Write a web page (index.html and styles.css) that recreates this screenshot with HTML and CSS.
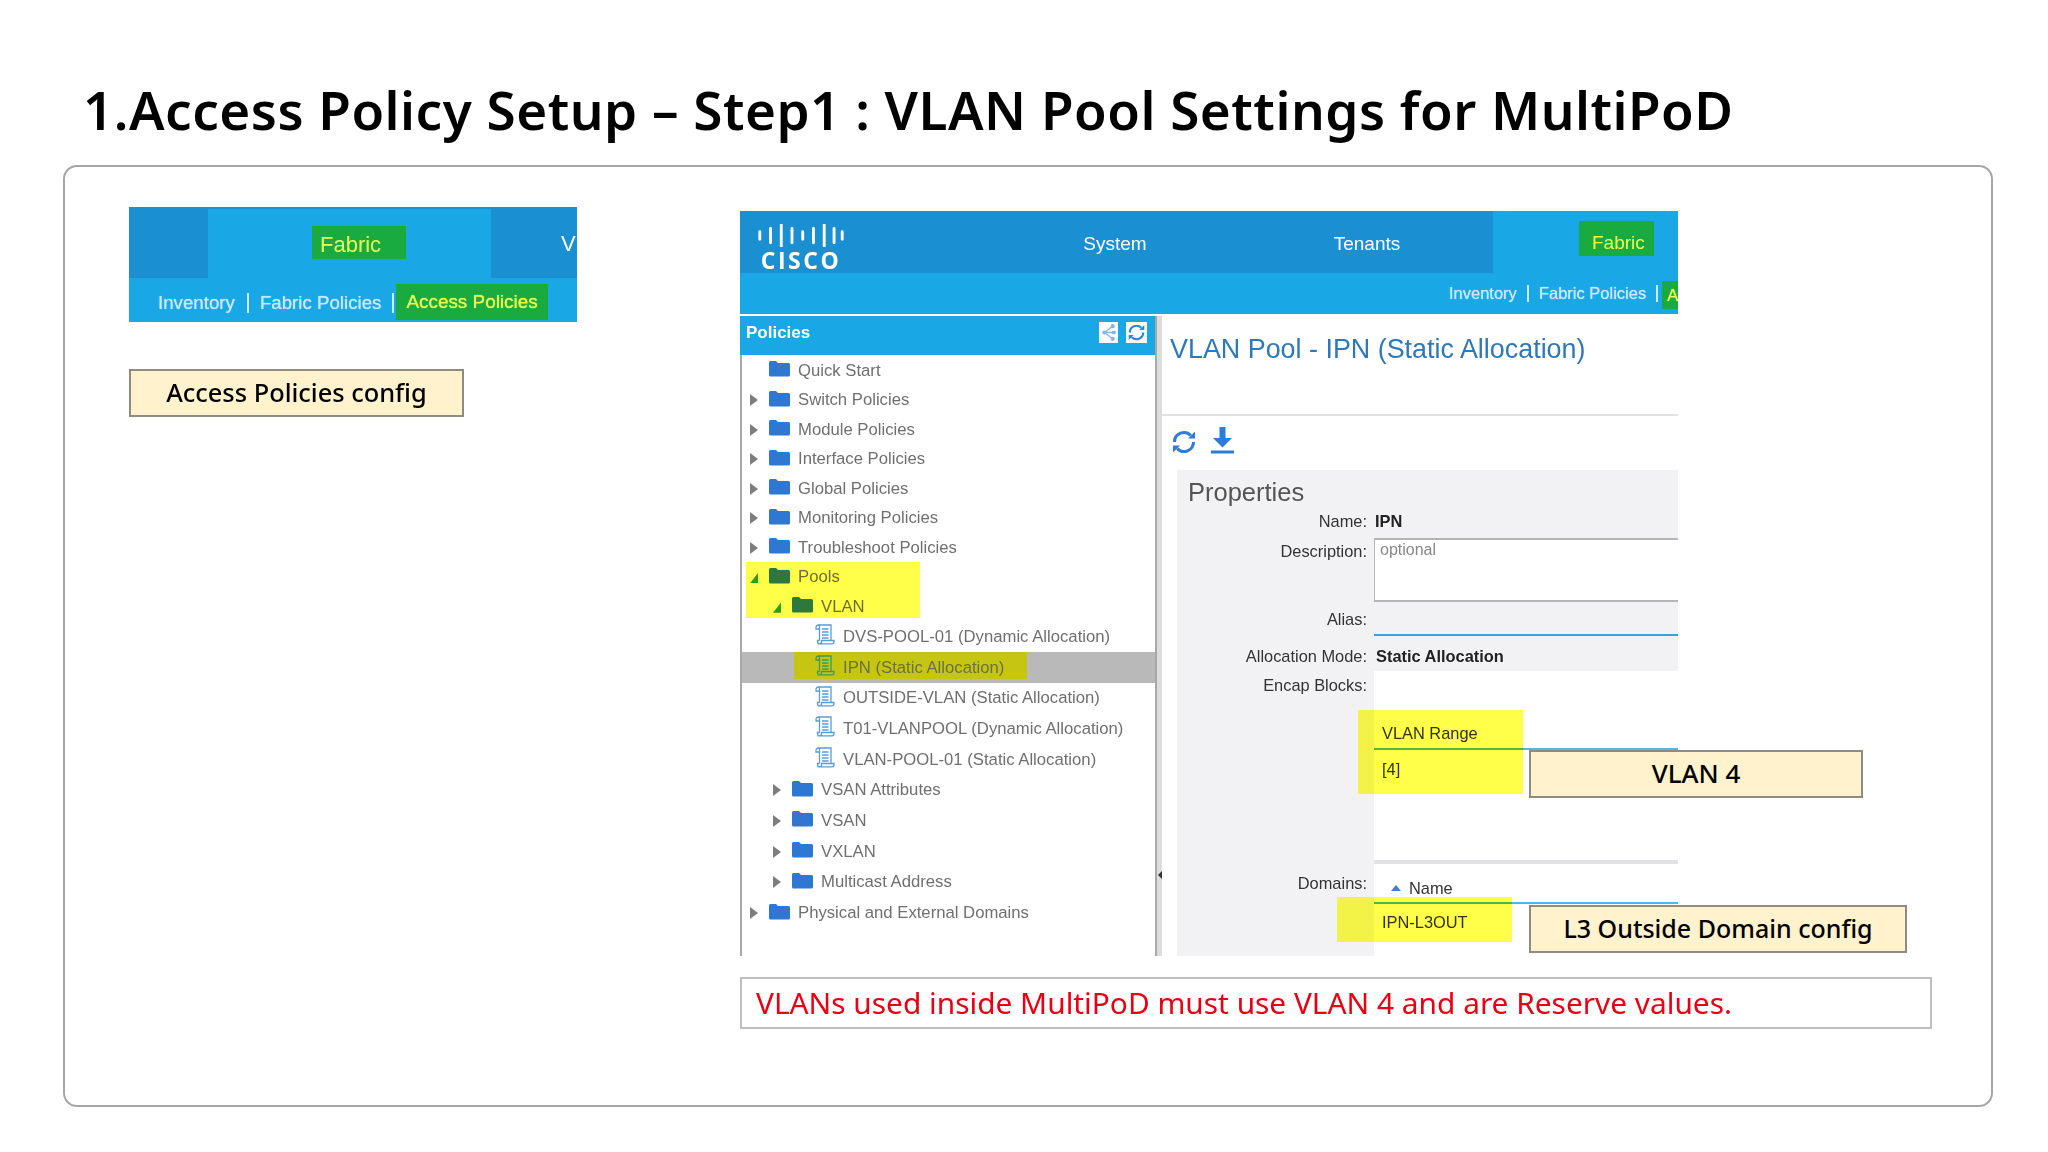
FILE: index.html
```html
<!DOCTYPE html>
<html lang="en">
<head>
<meta charset="utf-8">
<title>VLAN Pool Settings for MultiPoD</title>
<link rel="stylesheet" href="styles.css">
</head>
<body>
<svg class="defs" aria-hidden="true">
  <symbol id="folder" viewBox="0 0 21 17"><path d="M0 2.500A1.500 1.500 0 0 1 1.500 1H7l2 2h10.500A1.500 1.500 0 0 1 21 4.500V15a1.500 1.500 0 0 1-1.500 1.500h-18A1.500 1.500 0 0 1 0 15z" fill="currentColor"/></symbol>
  <symbol id="doc" viewBox="0 0 20 21"><g fill="none" stroke="currentColor" stroke-width="1.300"><path d="M1 3.500A2.500 2.500 0 0 1 3.500 1H16v15.500"/><path d="M1 3.500V5h3.500V3.500A2.500 2.500 0 0 0 3.500 1"/><path d="M4.500 5v11.500"/><path d="M2.500 19.800h14.500a2 2 0 0 0 2-2v-1.300H6.500v1.300a2 2 0 0 1-2 2 2 2 0 0 1-2-2v-1.300h2"/><path d="M7 5h6.500M7 8h6.500M7 11h6.500M7 14h6.500"/></g></symbol>
  <symbol id="sync" viewBox="0 0 26 24"><g fill="none" stroke="currentColor" stroke-width="3"><path d="M3.500 12a9.500 9.500 0 0 1 16.300-6.600"/><path d="M22.500 12a9.500 9.500 0 0 1-16.300 6.600"/></g><path d="M17 8.500h7V1.500zM9 15.500H2v7z" fill="currentColor"/></symbol>
</svg>
<main class="slide">
  <h1 class="title">1.Access Policy Setup – Step1 : VLAN Pool Settings for MultiPoD</h1>
  <section class="frame">
    <div class="col-left">
      <div class="strip">
        <div class="strip-top">
          <div class="strip-tab"><span class="tag strip-fabric">Fabric</span></div>
          <div class="strip-next">V</div>
        </div>
        <div class="strip-sub">
          <span>Inventory</span><i class="sep"></i><span>Fabric Policies</span><i class="sep sep-b"></i><span class="tag strip-access">Access Policies</span>
        </div>
      </div>
      <div class="callout callout-access">Access Policies config</div>
    </div>
    <div class="col-right">
      <div class="screen">
        <header class="nav">
          <div class="logo">
            <svg class="bars" viewBox="0 0 90 24" aria-hidden="true"><path d="M2 8v8M13.200 4.500v15M24.400 1v22M35.600 4.500v15M46.800 8v8M58 4.500v15M69.200 1v22M79.500 4.500v15M88 8v8" stroke="currentColor" stroke-width="3" stroke-linecap="round"/></svg>
            <span class="wordmark">CISCO</span>
          </div>
          <div class="tab">System</div>
          <div class="tab">Tenants</div>
          <div class="tab-on"><span class="tag nav-fabric">Fabric</span></div>
        </header>
        <div class="subnav"><span>Inventory</span><i class="sep"></i><span>Fabric Policies</span><i class="sep sep-c"></i><span class="tag nav-access">A</span></div>
        <div class="workspace">
          <aside class="tree">
            <div class="tree-head"><b>Policies</b>
              <span class="tool"><svg viewBox="0 0 18 20" aria-hidden="true"><path d="M0 0h18v20H0z" fill="#fff"/><path d="M13 4L5 10l8 6M5 10h8" stroke="#7fb8e6" stroke-width="1.200" fill="none"/><circle cx="13" cy="4" r="2" fill="#7fb8e6"/><circle cx="5" cy="10" r="2" fill="#7fb8e6"/><circle cx="13" cy="16" r="2" fill="#7fb8e6"/><circle cx="14" cy="10" r="2" fill="#7fb8e6"/></svg></span>
              <span class="tool tool-sync"><svg class="sync-mini" aria-hidden="true"><use href="#sync"/></svg></span>
            </div>
            <ul class="rows">
              <li class="row l1"><i class="caret none"></i><svg class="folder"><use href="#folder"/></svg>Quick Start</li>
              <li class="row l1"><i class="caret"></i><svg class="folder"><use href="#folder"/></svg>Switch Policies</li>
              <li class="row l1"><i class="caret"></i><svg class="folder"><use href="#folder"/></svg>Module Policies</li>
              <li class="row l1"><i class="caret"></i><svg class="folder"><use href="#folder"/></svg>Interface Policies</li>
              <li class="row l1"><i class="caret"></i><svg class="folder"><use href="#folder"/></svg>Global Policies</li>
              <li class="row l1"><i class="caret"></i><svg class="folder"><use href="#folder"/></svg>Monitoring Policies</li>
              <li class="row l1"><i class="caret"></i><svg class="folder"><use href="#folder"/></svg>Troubleshoot Policies</li>
              <li class="row l1"><i class="caret open"></i><svg class="folder"><use href="#folder"/></svg>Pools</li>
              <li class="row l2"><i class="caret open"></i><svg class="folder"><use href="#folder"/></svg>VLAN</li>
              <li class="row l3 tall"><svg class="doc"><use href="#doc"/></svg>DVS-POOL-01 (Dynamic Allocation)</li>
              <li class="row l3 tall selected"><svg class="doc"><use href="#doc"/></svg>IPN (Static Allocation)</li>
              <li class="row l3 tall"><svg class="doc"><use href="#doc"/></svg>OUTSIDE-VLAN (Static Allocation)</li>
              <li class="row l3 tall"><svg class="doc"><use href="#doc"/></svg>T01-VLANPOOL (Dynamic Allocation)</li>
              <li class="row l3 tall"><svg class="doc"><use href="#doc"/></svg>VLAN-POOL-01 (Static Allocation)</li>
              <li class="row l2 tall"><i class="caret"></i><svg class="folder"><use href="#folder"/></svg>VSAN Attributes</li>
              <li class="row l2 tall"><i class="caret"></i><svg class="folder"><use href="#folder"/></svg>VSAN</li>
              <li class="row l2 tall"><i class="caret"></i><svg class="folder"><use href="#folder"/></svg>VXLAN</li>
              <li class="row l2 tall"><i class="caret"></i><svg class="folder"><use href="#folder"/></svg>Multicast Address</li>
              <li class="row l1 tall"><i class="caret"></i><svg class="folder"><use href="#folder"/></svg>Physical and External Domains</li>
            </ul>
          </aside>
          <div class="splitter"><i class="grip"></i></div>
          <div class="pane">
            <h2 class="pane-title">VLAN Pool - IPN (Static Allocation)</h2>
            <div class="toolbar">
              <svg class="act-sync" aria-hidden="true"><use href="#sync"/></svg>
              <svg class="act-down" viewBox="0 0 23 27" aria-hidden="true"><path d="M8.500 0h6v11H21L11.500 20.500 2 11h6.500z" fill="currentColor"/><path d="M0 25h23" stroke="currentColor" stroke-width="3"/></svg>
            </div>
            <div class="props">
              <h3 class="props-title">Properties</h3>
              <div class="field f-name"><label class="lab">Name:</label><strong class="val-b">IPN</strong></div>
              <div class="field f-desc"><label class="lab">Description:</label><div class="area">optional</div></div>
              <div class="field f-alias"><label class="lab">Alias:</label><div class="input"></div></div>
              <div class="field f-mode"><label class="lab">Allocation Mode:</label><strong class="val-b val-mode">Static Allocation</strong></div>
              <div class="field f-encap"><label class="lab">Encap Blocks:</label>
                <div class="table t-encap"><div class="th">VLAN Range</div><div class="td">[4]</div></div>
              </div>
              <div class="field f-dom"><label class="lab">Domains:</label>
                <div class="table t-dom"><div class="th"><i class="sort"></i>Name</div><div class="td">IPN-L3OUT</div></div>
              </div>
            </div>
          </div>
        </div>
        <i class="hl hl-pools"></i>
        <i class="hl hl-range"></i>
        <i class="hl hl-l3"></i>
      </div>
      <div class="note">VLANs used inside MultiPoD must use VLAN 4 and are Reserve values.</div>
      <div class="callout callout-vlan">VLAN 4</div>
      <div class="callout callout-l3">L3 Outside Domain config</div>
    </div>
  </section>
</main>
</body>
</html>
```
FILE: styles.css
```css
* { box-sizing: border-box; }
html, body { margin: 0; padding: 0; background: #fff; }
.defs { position: absolute; width: 0; height: 0; overflow: hidden; }
.slide { width: 2048px; height: 1152px; padding: 76px 55px 0 63px; font-family: "Noto Sans", sans-serif; color: #000; overflow: hidden; }
.title { margin: 0 0 0 20px; height: 89px; font-size: 53px; line-height: 68px; font-weight: 600; letter-spacing: .5px; white-space: nowrap; }
.frame { display: flex; width: 1930px; height: 942px; border: 2px solid #a6a6a6; border-radius: 14px; }
.col-left { width: 512px; padding: 40px 0 0 64px; flex: none; }
.col-right { position: relative; margin-left: 163px; padding-top: 44px; width: 1192px; flex: none; }

/* shared */
.tag { background: #1aab40; color: #e9ff55; }
.sep { display: block; width: 2px; height: 20px; background: #cbeafb; flex: none; }
.strip, .screen { font-family: "Liberation Sans", Arial, sans-serif; }

/* left strip */
.strip { width: 448px; height: 115px; background: #1aa7e6; overflow: hidden; }
.strip-top { height: 71px; background: #1a8fd1; display: flex; color: #fff; }
.strip-tab { margin: 2px 0 0 79px; width: 283px; background: #1aa7e6; padding: 17px 0 0 104px; }
.strip-fabric { display: block; width: 94px; height: 33px; padding-left: 8px; font-size: 22px; line-height: 37px; }
.strip-next { margin-left: 70px; font-size: 22px; line-height: 74px; }
.strip-sub { display: flex; align-items: center; height: 38px; margin-top: 6px; padding-left: 29px; color: #c8e9fb; font-size: 18.700px; text-shadow: 0 0 1px currentColor; white-space: nowrap; }
.strip-sub .sep { margin: 0 11px 0 12px; }
.strip-sub .sep-b { margin: 0 2px 0 11px; }
.strip-access { padding: 0 0 0 10px; height: 36px; line-height: 36px; width: 152px; margin-bottom: 2px; color: #e9ff55; font-size: 18.900px; }

/* callouts */
.callout { background: #fff2cc; border: 2px solid #8c8c80; text-align: center; font-family: "Noto Sans", sans-serif; font-weight: 500; font-size: 25px; line-height: 44px; height: 48px; }
.callout-access { width: 335px; margin-top: 47px; font-size: 25.400px; line-height: 42px; }
.callout-vlan, .callout-l3 { position: absolute; z-index: 3; left: 789px; }
.callout-vlan { top: 583px; width: 334px; font-size: 26px; line-height: 42px; }
.callout-l3 { top: 738px; width: 378px; line-height: 42px; }

/* screenshot */
.screen { position: relative; width: 938px; height: 745px; }
.nav { display: flex; height: 62px; background: #1a8fd1; color: #fff; font-size: 19px; }
.logo { width: 249px; padding: 13px 0 0 16px; }
.bars { display: block; width: 90px; height: 23px; color: #fff; }
.wordmark { display: block; width: 90px; margin-top: 3px; text-align: center; font-family: "Open Sans", sans-serif; font-weight: 700; font-size: 23px; line-height: 20px; letter-spacing: 2.500px; }
.tab { width: 252px; text-align: center; line-height: 66px; }
.tab-on { flex: 1; background: #1aa7e6; padding: 10px 0 0 86px; }
.nav-fabric { display: block; width: 75px; height: 35px; padding-left: 13px; line-height: 44px; }
.subnav { display: flex; align-items: center; height: 41px; padding: 0 0 0 709px; background: #1aa7e6; color: #c8e9fb; font-size: 16.500px; text-shadow: 0 0 1px currentColor; white-space: nowrap; overflow: hidden; }
.subnav .sep { height: 17px; margin: 0 10px; }
.subnav .sep-c { margin: 0 4px 0 10px; }
.nav-access { flex: none; width: 16px; height: 28px; line-height: 28px; padding-left: 5px; margin-top: 2px; color: #e9ff55; overflow: hidden; }
.workspace { display: flex; height: 640px; margin-top: 2px; }

/* tree */
.tree { width: 415px; flex: none; font-size: 16.700px; color: #6f6f6f; border-left: 2px solid #a8a8a8; }
.tree-head { display: flex; align-items: center; height: 39px; margin-left: -2px; width: 416px; padding: 0 0 6px 6px; background: #1aa7e6; color: #fff; }
.tree-head b { flex: 1; font-size: 17px; }
.tool { display: block; width: 19px; height: 21px; margin-right: 8px; }
.tool svg { display: block; width: 100%; height: 100%; }
.tool-sync { background: #fff; color: #1a8fd1; width: 21px; margin-right: 9px; padding: 2px 1px; }
.rows { list-style: none; margin: 0; padding: 1px 0 0; }
.row { display: flex; align-items: center; height: 29.500px; white-space: nowrap; }
.tall { height: 30.700px; }
.l1 { padding-left: 8px; }
.l2 { padding-left: 31px; }
.l3 { padding-left: 73px; }
.selected { color: #6b7040; background: linear-gradient(#c6c612, #c6c612) 52px 0 / 233px 27px no-repeat, #b9b9b9; }
.selected .doc { color: #3f9a55; }
.caret { width: 0; height: 0; margin-right: 11px; border-left: 8px solid #7d7d7d; border-top: 6px solid transparent; border-bottom: 6px solid transparent; flex: none; }
.caret.none { visibility: hidden; }
.caret.open { width: 8px; height: 12px; border: 0; background: #2f9e44; clip-path: polygon(100% 15%, 100% 100%, 0 100%); }
.folder { width: 21px; height: 17px; margin: -4px 8px 0 0; color: #2f78d2; flex: none; }
.doc { width: 20px; height: 21px; margin: -4px 8px 0 0; color: #5b9bd8; flex: none; }

/* splitter */
.splitter { position: relative; width: 7px; flex: none; background: #dcdcdc; border-left: 2px solid #a8a8a8; }
.grip { position: absolute; top: 555px; left: 1px; width: 0; height: 0; border-right: 4px solid #333; border-top: 4px solid transparent; border-bottom: 4px solid transparent; }

/* right pane */
.pane { flex: 1; min-width: 0; overflow: hidden; }
.pane-title { margin: 0; height: 100px; padding: 16px 0 0 8px; font-size: 26.900px; line-height: 34px; font-weight: 400; color: #2f78b8; border-bottom: 2px solid #e2e2e2; white-space: nowrap; }
.toolbar { display: flex; height: 54px; padding: 11px 0 0 9px; color: #2f7bd8; }
.act-sync { width: 26px; height: 24px; margin-top: 3px; }
.act-down { width: 23px; height: 27px; margin-left: 14px; }
.props { margin-left: 15px; height: 486px; background: #f2f2f4; font-size: 16.400px; color: #333; }
.props-title { margin: 0; height: 37px; padding: 6px 0 0 11px; font-size: 25.500px; line-height: 32px; font-weight: 400; color: #555; }
.field { display: grid; grid-template-columns: 197px 1fr; }
.lab { text-align: right; padding-right: 7px; }
.val-b { color: #222; padding-left: 1px; }
.val-mode { padding-left: 2px; }
.f-name { height: 31px; line-height: 29px; }
.f-desc { height: 64px; line-height: 27px; }
.area { border: 1px solid #b5b5b5; border-top-width: 2px; border-right: 0; border-bottom-width: 2px; background: #fff; height: 64px; padding-left: 5px; color: #888; font-size: 16px; line-height: 19px; }
.f-alias { height: 34px; line-height: 34px; }
.input { border-bottom: 2px solid #3fa0d8; height: 34px; }
.f-mode { height: 35px; line-height: 40px; }
.f-encap { height: 193px; line-height: 28px; }
.t-encap { background: #fff; border-bottom: 4px solid #e2e2e4; height: 193px; padding-top: 47px; }
.table .th { height: 32px; padding-left: 8px; line-height: 30px; border-bottom: 2px solid #4fb8e8; }
.table .td { padding-left: 8px; line-height: 38px; }
.f-dom { height: 93px; line-height: 38px; }
.t-dom { background: #fff; height: 93px; padding-top: 9px; }
.t-dom .th { height: 31px; padding-left: 17px; line-height: 28px; display: flex; align-items: center; }
.t-dom .td { line-height: 36px; }
.sort { width: 0; height: 0; margin-right: 8px; border-bottom: 6px solid #4a7cc0; border-left: 5px solid transparent; border-right: 5px solid transparent; }

/* highlights */
.hl { position: absolute; background: #ffff4a; mix-blend-mode: multiply; z-index: 2; }
.hl-pools { left: 6px; top: 351px; width: 174px; height: 56px; }
.hl-range { left: 618px; top: 499px; width: 165px; height: 84px; }
.hl-l3 { left: 597px; top: 686px; width: 175px; height: 45px; }

/* note */
.note { margin-top: 21px; width: 1192px; height: 52px; padding-left: 14px; border: 2px solid #bfbfbf; color: #e60012; font-size: 29.850px; line-height: 48px; white-space: nowrap; }
```
